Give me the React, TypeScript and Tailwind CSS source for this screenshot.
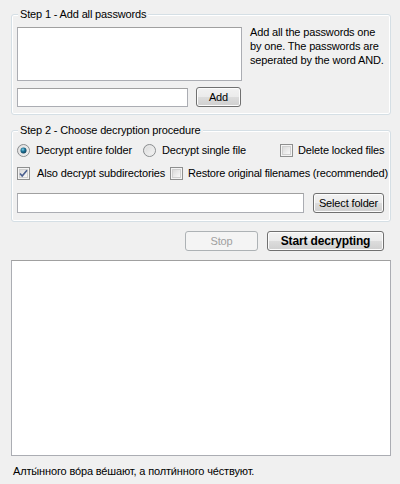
import React from "react";

const font = { fontFamily: '"Liberation Sans", Arial, sans-serif' };

function Radio({ checked }: { checked?: boolean }) {
  return (
    <svg width="13" height="13" viewBox="0 0 13 13" className="shrink-0">
      <defs>
        <linearGradient id={checked ? "rg1" : "rg0"} x1="0" y1="0" x2="1" y2="1">
          <stop offset="0" stopColor="#d6d6d6" />
          <stop offset="1" stopColor="#fafafa" />
        </linearGradient>
        <radialGradient id="dot" cx="0.4" cy="0.35" r="0.7">
          <stop offset="0" stopColor="#7fd0e8" />
          <stop offset="0.45" stopColor="#1f7396" />
          <stop offset="1" stopColor="#0d3c57" />
        </radialGradient>
      </defs>
      <circle cx="6.5" cy="6.5" r="6" fill={`url(#${checked ? "rg1" : "rg0"})`} stroke="#8a8d8f" strokeWidth="1" />
      <circle cx="6.5" cy="6.5" r="4.5" fill="none" stroke="#e9e9e9" strokeWidth="1" />
      {checked && <circle cx="6.5" cy="6.5" r="3" fill="url(#dot)" />}
    </svg>
  );
}

function Check({ checked }: { checked?: boolean }) {
  return (
    <svg width="13" height="13" viewBox="0 0 13 13" className="shrink-0">
      <defs>
        <linearGradient id="cbg" x1="0" y1="0" x2="1" y2="1">
          <stop offset="0" stopColor="#d8d8d8" />
          <stop offset="1" stopColor="#fbfbfb" />
        </linearGradient>
      </defs>
      <rect x="0.5" y="0.5" width="12" height="12" fill="#f4f4f4" stroke="#8e8f8f" />
      <rect x="2.5" y="2.5" width="8" height="8" fill="url(#cbg)" stroke="#d0d0d0" />
      {checked && (
        <path d="M3 6.5 L5.2 9 L10 3.2" fill="none" stroke="#4a5f8f" strokeWidth="1.6" />
      )}
    </svg>
  );
}

function Button({ children, disabled, bold, className }: { children: React.ReactNode; disabled?: boolean; bold?: boolean; className: string }) {
  return (
    <div
      className={
        "flex items-center justify-center rounded-[3px] border " +
        (disabled
          ? "border-[#adb2b5] bg-[#f4f4f4] text-[#a0a0a0] "
          : "border-[#707070] bg-[linear-gradient(#f2f2f2_0%,#ebebeb_50%,#dddddd_50%,#cfcfcf_100%)] text-black shadow-[inset_0_0_0_1px_#fcfcfc] ") +
        (bold ? "font-bold " : "") +
        className
      }
    >
      {children}
    </div>
  );
}

function Group({ title, className, children }: { title: string; className: string; children: React.ReactNode }) {
  return (
    <div className={"relative rounded-[3px] border border-[#d5dfe5] shadow-[inset_0_0_0_1px_#ffffff] " + className}>
      <span className="absolute -top-[8px] left-[6px] bg-[#f0f0f0] px-[2px] leading-[14px]">{title}</span>
      {children}
    </div>
  );
}

export default function App() {
  return (
    <div
      style={font}
      className="w-[400px] h-[484px] overflow-hidden bg-[#f0f0f0] pl-[11px] pr-[9px] pt-[14px] text-[11px] tracking-[-0.15px] text-black"
    >
      <Group title="Step 1 - Add all passwords" className="h-[101px] pl-[5px] pt-[12px]">
        <div className="flex">
          <div className="w-[225px] h-[54px] bg-white border border-[#abadb3] border-t-[#a0a0a0]" />
          <div className="ml-[8px] -mt-[2px] w-[140px] whitespace-nowrap leading-[14px]">
            Add all the passwords one
            <br />
            by one. The passwords are
            <br />
            seperated by the word AND.
          </div>
        </div>
        <div className="mt-[6px] flex items-start">
          <div className="mt-[1px] w-[171px] h-[19px] bg-white border border-[#abadb3] border-t-[#a0a0a0]" />
          <Button className="ml-[8px] w-[45px] h-[20px]">Add</Button>
        </div>
      </Group>

      <Group title="Step 2 - Choose decryption procedure" className="mt-[15px] h-[92px] pl-[5px] pt-[11px]">
        <div className="flex h-[17px] items-center">
          <div className="flex w-[126px] items-center">
            <Radio checked />
            <span className="ml-[6px]">Decrypt entire folder</span>
          </div>
          <div className="flex w-[137px] items-center">
            <Radio />
            <span className="ml-[6px]">Decrypt single file</span>
          </div>
          <div className="flex items-center">
            <Check />
            <span className="ml-[5px]">Delete locked files</span>
          </div>
        </div>
        <div className="mt-[6px] flex h-[17px] items-center">
          <div className="flex w-[153px] items-center">
            <Check checked />
            <span className="ml-[7px]">Also decrypt subdirectories</span>
          </div>
          <div className="flex items-center">
            <Check />
            <span className="ml-[5px] tracking-[-0.2px]">Restore original filenames (recommended)</span>
          </div>
        </div>
        <div className="mt-[11px] flex items-start">
          <div className="w-[287px] h-[20px] bg-white border border-[#abadb3] border-t-[#a0a0a0]" />
          <Button className="ml-[9px] w-[71px] h-[20px]">Select folder</Button>
        </div>
      </Group>

      <div className="mt-[9px] flex justify-end pr-[7px]">
        <Button disabled className="w-[73px] h-[20px]">Stop</Button>
        <Button bold className="ml-[9px] w-[117px] h-[20px] text-[12px]">Start decrypting</Button>
      </div>

      <div className="mt-[9px] h-[196px] w-[380px] bg-white border border-[#abadb3] border-t-[#a0a0a0]" />

      <div className="mt-[8px] ml-[2px] leading-[14px]">
        Алты́нного во́ра ве́шают, а полти́нного че́ствуют.
      </div>
    </div>
  );
}
